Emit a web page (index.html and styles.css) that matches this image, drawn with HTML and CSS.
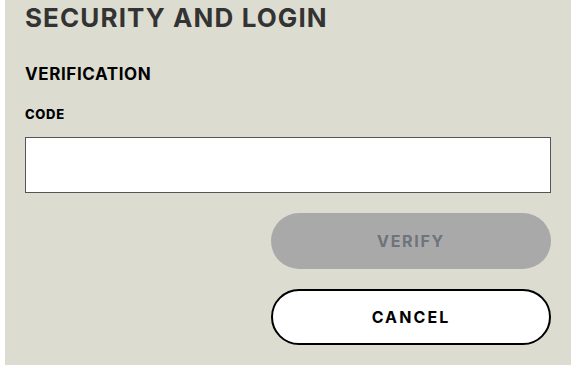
FILE: index.html
```html
<!DOCTYPE html>
<html lang="en">
<head>
<meta charset="utf-8">
<title>Security and Login</title>
<link rel="stylesheet" href="styles.css">
</head>
<body>
<main class="panel">
  <h1 class="title">SECURITY AND LOGIN</h1>
  <h2 class="section">VERIFICATION</h2>
  <label class="label" for="code">CODE</label>
  <input class="field" id="code" type="text">
  <div class="actions">
    <button class="btn btn-verify" type="button" disabled>VERIFY</button>
    <button class="btn btn-cancel" type="button">CANCEL</button>
  </div>
</main>
</body>
</html>
```

FILE: styles.css
```css
html, body {
  margin: 0;
  padding: 0;
  background: #ffffff;
}
body {
  font-family: Inter, "Liberation Sans", sans-serif;
}
.panel {
  box-sizing: border-box;
  width: 566px;
  height: 365px;
  margin-left: 5px;
  padding: 2px 20px 0 20px;
  background: #dcddd0;
  display: flex;
  flex-direction: column;
}
.title {
  margin: 0;
  font-size: 26px;
  line-height: 32px;
  font-weight: 700;
  color: #333333;
  letter-spacing: 1.1px;
}
.section {
  margin: 30px 0 0 0;
  font-size: 17px;
  line-height: 20px;
  font-weight: 700;
  color: #000000;
  letter-spacing: 0.6px;
}
.label {
  display: block;
  margin-top: 21.5px;
  font-size: 13px;
  line-height: 16px;
  font-weight: 800;
  color: #000000;
  letter-spacing: 0.7px;
}
.field {
  box-sizing: border-box;
  display: block;
  margin-top: 15px;
  width: 100%;
  height: 56px;
  border: 1px solid #555555;
  border-radius: 0;
  background: #ffffff;
  padding: 0 12px;
  font-size: 16px;
  outline: none;
}
.actions {
  margin-top: 20px;
  display: flex;
  flex-direction: column;
  align-items: flex-end;
  gap: 20px;
}
.btn {
  box-sizing: border-box;
  width: 280px;
  height: 56px;
  border-radius: 28px;
  font-family: Inter, "Liberation Sans", sans-serif;
  font-size: 16px;
  font-weight: 700;
  padding: 0;
}
.btn-verify {
  background: #a9a9a9;
  color: #6d747b;
  border: none;
  letter-spacing: 1.7px;
}
.btn-cancel {
  background: #ffffff;
  color: #000000;
  border: 2px solid #000000;
  letter-spacing: 2.1px;
}
```
